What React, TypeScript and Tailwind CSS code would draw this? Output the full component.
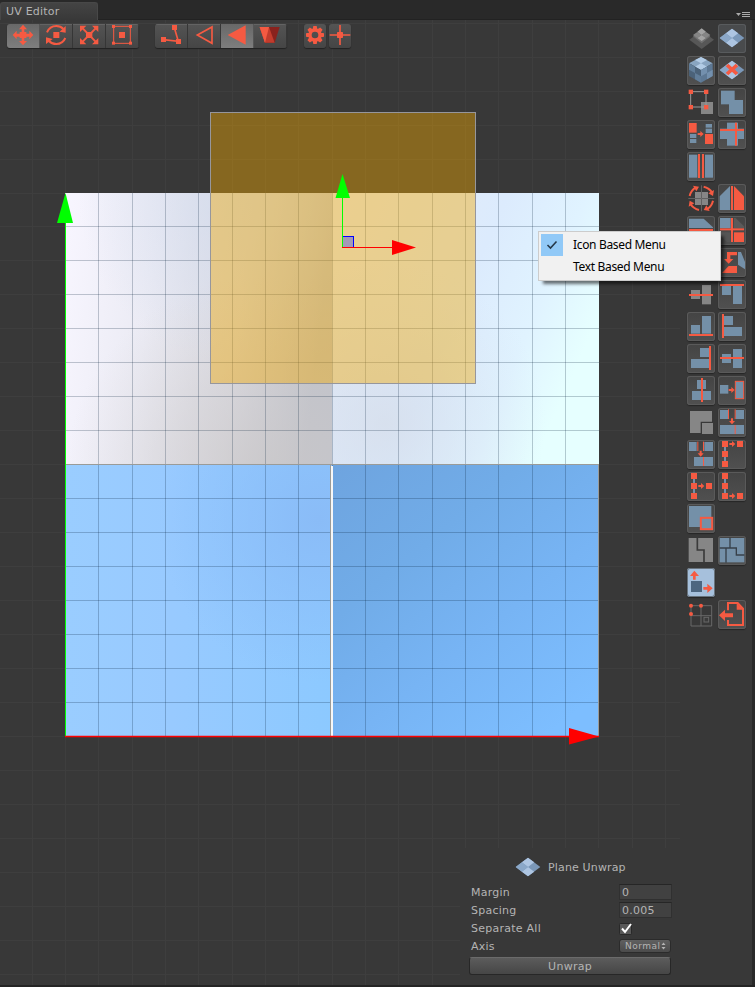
import React from "react";

const RED = "#f55a42";
const BLUE = "#7490a8";
const GRAY = "#868686";
const DARK = "#3b3b3b";

type Box = [number, number, number, number];

const Rects = ({ c, r }: { c: string; r: Box[] }) => (
  <>
    {r.map(([x, y, w, h], i) => (
      <rect key={i} x={x} y={y} width={w} height={h} fill={c} />
    ))}
  </>
);

/* Small arrow centred on x, y; rot turns it from pointing right. */
const Arrow = ({ x, y, rot = 0 }: { x: number; y: number; rot?: number }) => (
  <path transform={`translate(${x} ${y}) rotate(${rot})`} d="M-9-3H-1V-9L9 0L-1 9V3H-9Z" fill={RED} />
);

const Diamond = ({ a = "#adc5e2", b = "#7b98b9" }: { a?: string; b?: string }) => (
  <>
    <path d="M42 14L79 42L42 70L5 42Z" fill={b} />
    <path d="M42 14L60.500 28L42 42L23.500 28ZM42 42L60.500 56L42 70L23.500 56Z" fill={a} />
    <path d="M23.500 28L42 42L23.500 56L5 42Z" fill="#8ba8c9" />
  </>
);

const icons: Record<string, React.ReactNode> = {
  layers: (
    <>
      <path d="M44 20L81 47L44 75L7 47Z" fill="#575757" />
      <path d="M44 16L70 37L44 58L18 37Z" fill="#707070" />
      <path d="M44 13L57 23L44 33L31 23ZM44 33L57 42L44 51L31 42Z" fill="#a3a3a3" />
      <path d="M31 24L44 33L31 42L18 33ZM57 24L70 33L57 42L44 33Z" fill="#858585" />
    </>
  ),
  plane: <Diamond />,
  cube: (
    <>
      <path d="M42 3L77 22L42 42L6 22Z" fill="#89a5c1" />
      <path d="M42 3L60 12L42 22L24 12ZM42 22L60 32L42 42L24 32Z" fill="#b2cbe5" />
      <path d="M6 22L42 42V80L6 60Z" fill="#4b6279" />
      <path d="M6 22L24 32V51L6 41ZM24 51L42 61V80L24 70Z" fill="#617d99" />
      <path d="M77 22L42 42V80L77 60Z" fill="#5d7894" />
      <path d="M42 42L60 32V51L42 61ZM60 51L77 41V60L60 70Z" fill="#7390ae" />
    </>
  ),
  planeX: (
    <>
      <Diamond />
      <path d="M27 27L57 54M57 27L27 54" stroke={RED} strokeWidth="11" />
    </>
  ),
  scaleBox: (
    <>
      <Rects c={GRAY} r={[[42, 42, 36, 36]]} />
      <path d="M11 11H57V57H11Z" fill="none" stroke="#999" strokeWidth="3" />
      <Rects c={RED} r={[[5, 5, 13, 13], [51, 5, 13, 13], [5, 51, 13, 13], [51, 51, 13, 13]]} />
    </>
  ),
  union: <Rects c={BLUE} r={[[9, 8, 41, 41], [33, 36, 42, 42]]} />,
  swap: (
    <>
      <Rects c={BLUE} r={[[56, 12, 19, 11], [56, 26, 19, 13], [9, 42, 19, 12], [9, 57, 19, 12]]} />
      <Rects c={RED} r={[[6, 9, 23, 29], [54, 42, 24, 30]]} />
      <Arrow x={41} y={42} />
    </>
  ),
  cross: (
    <>
      <Rects c={BLUE} r={[[6, 26, 72, 31], [27, 8, 33, 69]]} />
      <Rects c={RED} r={[[6, 27, 72, 6], [51, 8, 6, 69]]} />
    </>
  ),
  split: (
    <>
      <Rects c={BLUE} r={[[6, 8, 25, 69], [54, 8, 24, 69]]} />
      <Rects c={RED} r={[[33, 6, 6, 72], [45, 6, 6, 72]]} />
    </>
  ),
  rotate: (
    <>
      <Rects c={GRAY} r={[[24, 24, 18, 18], [45, 24, 18, 18], [24, 45, 18, 18], [45, 45, 18, 18]]} />
      <path d="M43.500 4V82M4 43.500H82" stroke="#757575" strokeWidth="2" />
      {[0, 90, 180, 270].map((a) => (
        <g key={a} transform={`rotate(${a} 43 43)`}>
          <path d="M8 36Q12 19 25 11" stroke={RED} strokeWidth="6" fill="none" />
          <path d="M18 5L36 8L28 22Z" fill={RED} />
        </g>
      ))}
    </>
  ),
  mirrorH: (
    <>
      <path d="M5 78V37L36 6V78Z" fill={BLUE} />
      <Rects c={RED} r={[[39, 6, 6, 72]]} />
      <path d="M48 6L78 37V78H48Z" fill={RED} />
    </>
  ),
  mirrorV: (
    <>
      <path d="M6 8H50L78 34V36H6Z" fill={BLUE} />
      <Rects c={RED} r={[[6, 39, 72, 6]]} />
      <path d="M6 48H78L50 78H6Z" fill={RED} />
    </>
  ),
  mirrorBoth: (
    <>
      <Rects c={BLUE} r={[[6, 6, 32, 30]]} />
      <path d="M53 6L78 31V36H48V6Z" fill="#5a5a5a" />
      <Rects c={RED} r={[[39, 6, 6, 72], [6, 37, 72, 6], [48, 49, 30, 29]]} />
      <path d="M6 49H36V78H27L6 58Z" fill="#555" />
    </>
  ),
  turn: (
    <>
      <path d="M57 12H27V33H18L32 47L46 33H37V22H57Z" fill={RED} />
      <path d="M32 54H57V75H12Z" fill={RED} />
      <path d="M60 12H69L81 42V64L60 50Z" fill={BLUE} />
    </>
  ),
  midGray: (
    <>
      <Rects c={GRAY} r={[[12, 30, 27, 27], [45, 15, 27, 58]]} />
      <Rects c={RED} r={[[6, 42, 72, 6]]} />
    </>
  ),
  alignTop: (
    <>
      <Rects c={BLUE} r={[[12, 18, 27, 27], [45, 18, 27, 54]]} />
      <Rects c={RED} r={[[6, 12, 72, 6]]} />
    </>
  ),
  alignBottom: (
    <>
      <Rects c={BLUE} r={[[12, 39, 27, 26], [45, 12, 27, 53]]} />
      <Rects c={RED} r={[[6, 66, 72, 6]]} />
    </>
  ),
  alignLeft: (
    <>
      <Rects c={BLUE} r={[[18, 12, 27, 27], [18, 45, 54, 27]]} />
      <Rects c={RED} r={[[12, 6, 6, 72]]} />
    </>
  ),
  alignRight: (
    <>
      <Rects c={BLUE} r={[[39, 12, 27, 27], [12, 45, 54, 27]]} />
      <Rects c={RED} r={[[66, 6, 6, 72]]} />
    </>
  ),
  alignMiddle: (
    <>
      <Rects c={BLUE} r={[[12, 30, 27, 27], [45, 15, 27, 57]]} />
      <Rects c={RED} r={[[6, 39, 72, 6]]} />
    </>
  ),
  alignCenter: (
    <>
      <Rects c={BLUE} r={[[30, 12, 27, 27], [15, 45, 57, 27]]} />
      <Rects c={RED} r={[[42, 6, 6, 72]]} />
    </>
  ),
  fit: (
    <>
      <Rects c={BLUE} r={[[6, 27, 25, 26]]} />
      <Arrow x={41} y={42} />
      <rect x="52" y="16" width="25" height="52" fill={BLUE} stroke={RED} strokeWidth="3" />
    </>
  ),
  grayCorner: (
    <>
      <path d="M9 9H75V41H41V75H9Z" fill={GRAY} />
      <Rects c={GRAY} r={[[45, 45, 33, 33]]} />
    </>
  ),
  weldWide: (
    <>
      <Rects c={BLUE} r={[[6, 6, 24, 27], [53, 6, 25, 27], [6, 51, 72, 27]]} />
      <Rects c={RED} r={[[30, 4, 3, 29], [50, 4, 3, 29], [50, 51, 3, 27]]} />
      <Arrow x={42} y={40} rot={90} />
    </>
  ),
  weldOffset: (
    <>
      <Rects c={BLUE} r={[[6, 6, 23, 27], [52, 6, 26, 27], [21, 51, 57, 27]]} />
      <Rects c={RED} r={[[31, 5, 3, 28], [48, 5, 3, 28], [48, 51, 3, 27]]} />
      <Arrow x={41} y={41} rot={90} />
    </>
  ),
  vertTop: (
    <>
      <Rects c={BLUE} r={[[18, 5, 6, 70]]} />
      <Rects c={RED} r={[[12, 3, 18, 18], [57, 3, 18, 18], [12, 33, 18, 18], [12, 63, 18, 18]]} />
      <Arrow x={43} y={12} />
    </>
  ),
  vertMid: (
    <>
      <Rects c={BLUE} r={[[18, 5, 6, 70]]} />
      <Rects c={RED} r={[[12, 3, 18, 18], [57, 33, 18, 18], [12, 33, 18, 18], [12, 63, 18, 18]]} />
      <Arrow x={43} y={42} />
    </>
  ),
  vertBot: (
    <>
      <Rects c={BLUE} r={[[18, 5, 6, 70]]} />
      <Rects c={RED} r={[[12, 3, 18, 18], [57, 63, 18, 18], [12, 33, 18, 18], [12, 63, 18, 18]]} />
      <Arrow x={43} y={72} />
    </>
  ),
  subSelect: (
    <>
      <Rects c={BLUE} r={[[6, 6, 67, 63]]} />
      <rect x="41.500" y="41.500" width="34" height="34" fill={BLUE} stroke={RED} strokeWidth="6" />
    </>
  ),
  splitGray: (
    <>
      <Rects c={GRAY} r={[[5, 6, 73, 72]]} />
      <path d="M31 6V42H51V78" fill="none" stroke={DARK} strokeWidth="5" />
    </>
  ),
  islands: (
    <>
      <Rects c={BLUE} r={[[5, 6, 74, 73]]} />
      <path d="M36 5V36H5M36 36H55V57H79M24 38V80" fill="none" stroke="#374049" strokeWidth="4" />
    </>
  ),
  move: (
    <>
      <Rects c="#4d6680" r={[[12, 39, 33, 33]]} />
      <path d="M18 35V24H9L22 8L36 24H26V35Z" fill={RED} />
      <path d="M49 57H61V47L77 61L61 75V65H49Z" fill={RED} />
    </>
  ),
  gridGray: (
    <>
      <path d="M12 17H74V78H12ZM42 17V78M12 47H74" fill="none" stroke="#686868" strokeWidth="3" />
      <rect x="51" y="52" width="14" height="14" fill={DARK} stroke="#686868" strokeWidth="3" />
      <circle cx="12" cy="17" r="6" fill={RED} />
      <circle cx="42" cy="17" r="6" fill={RED} />
      <circle cx="12" cy="42" r="6" fill={RED} />
    </>
  ),
  exportIcon: (
    <>
      <path d="M30 31V9H59L75 26V75H30V60" fill="none" stroke={RED} strokeWidth="6" />
      <path d="M56 9V29H76Z" fill={RED} />
      <path d="M3 46L21 29V40H45V52H21V63Z" fill={RED} />
    </>
  ),
};

type Kind = "btn" | "flat" | "active" | "light";
const tools: ([string, Kind] | null)[] = [
  ["layers", "flat"], ["plane", "active"],
  ["cube", "btn"], ["planeX", "btn"],
  ["scaleBox", "flat"], ["union", "btn"],
  ["swap", "btn"], ["cross", "btn"],
  ["split", "btn"], null,
  ["rotate", "flat"], ["mirrorH", "btn"],
  ["mirrorV", "btn"], ["mirrorBoth", "btn"],
  null, ["turn", "btn"],
  ["midGray", "flat"], ["alignTop", "btn"],
  ["alignBottom", "btn"], ["alignLeft", "btn"],
  ["alignRight", "btn"], ["alignMiddle", "btn"],
  ["alignCenter", "btn"], ["fit", "btn"],
  ["grayCorner", "flat"], ["weldWide", "btn"],
  ["weldOffset", "btn"], ["vertTop", "btn"],
  ["vertMid", "btn"], ["vertBot", "btn"],
  ["subSelect", "btn"], null,
  ["splitGray", "flat"], ["islands", "btn"],
  ["move", "light"], null,
  ["gridGray", "flat"], ["exportIcon", "btn"],
];

const kindClass: Record<Kind, string> = {
  btn: "rounded-[3px] bg-linear-to-b from-[#444] to-[#505050] shadow-[inset_0_0_0_1px_#5a5a5a,0_1px_1px_#262626]",
  active: "rounded-[3px] bg-[#494b4d] shadow-[inset_0_0_0_1px_#585b5d]",
  light: "rounded-[3px] bg-[#a6c0dc] shadow-[inset_0_0_0_1px_#68737d,0_1px_1px_#262626]",
  flat: "",
};

const TopIcon = ({ children }: { children: React.ReactNode }) => (
  <svg width="33" height="24" viewBox="0 0 99 72" className="block" fill={RED}>
    {children}
  </svg>
);

const topBtn =
  "flex h-6 w-[33px] items-center justify-center bg-linear-to-b from-[#545454] to-[#454545] shadow-[inset_-1px_0_0_#363636,inset_0_1px_0_#636363]";
const topActive =
  "flex h-6 w-[33px] items-center justify-center bg-linear-to-b from-[#686868] to-[#7e7e7e] shadow-[inset_-1px_0_0_#555]";

function TopBar() {
  return (
    <div className="flex h-6">
      <div className="flex overflow-hidden rounded-[3px] shadow-[0_1px_1px_#222]">
        <div className={topActive}>
          <TopIcon>
            <path d="M48 2L60 16H52V29H67V20L79 33L67 46V38H52V51H60L48 64L36 51H44V38H29V46L17 33L29 20V29H44V16H36Z" />
            <rect x="38" y="24" width="20" height="18" />
          </TopIcon>
        </div>
        <div className={topBtn}>
          <TopIcon>
            <path d="M21 25Q29 6 49 6Q62 6 70 15" fill="none" stroke={RED} strokeWidth="6" />
            <path d="M77 6V26L59 23Z" />
            <path d="M76 42Q68 60 49 60Q35 60 27 51" fill="none" stroke={RED} strokeWidth="6" />
            <path d="M18 60V40L38 45Z" />
            <rect x="40" y="24" width="18" height="18" />
          </TopIcon>
        </div>
        <div className={topBtn}>
          <TopIcon>
            <path d="M27 11L70 55M70 11L27 55" stroke={RED} strokeWidth="6" />
            <path d="M21 5H40L21 24ZM76 5V24L57 5ZM76 61H57L76 42ZM21 61V42L40 61Z" />
            <rect x="39" y="24" width="19" height="18" />
          </TopIcon>
        </div>
        <div className={topBtn}>
          <TopIcon>
            <rect x="23" y="7" width="50" height="51" fill="none" stroke={RED} strokeWidth="3" />
            <Rects c={RED} r={[[18, 3, 9, 9], [69, 3, 9, 9], [18, 53, 9, 9], [69, 53, 9, 9], [39, 24, 18, 18]]} />
          </TopIcon>
        </div>
      </div>
      <div className="ml-4 flex overflow-hidden rounded-[3px] shadow-[0_1px_1px_#222]">
        <div className={topBtn}>
          <TopIcon>
            <path d="M58 11L70 52L25 47" fill="none" stroke={RED} strokeWidth="5" />
            <Rects c={RED} r={[[51, 3, 15, 15], [63, 45, 15, 15], [18, 39, 15, 15]]} />
          </TopIcon>
        </div>
        <div className={topBtn}>
          <TopIcon>
            <path d="M72 9V58L28 33Z" fill="none" stroke={RED} strokeWidth="5" />
          </TopIcon>
        </div>
        <div className={topActive}>
          <TopIcon>
            <path d="M74 4V62L20 33Z" />
          </TopIcon>
        </div>
        <div className={topBtn}>
          <TopIcon>
            <path d="M17 9H45L33 56Z" />
            <path d="M45 9H77L62 56H33Z" fill="#89221d" />
            <path d="M17 9H45L62 56H33Z" fill="#c23c2d" />
            <path d="M17 9H45L33 56Z" />
          </TopIcon>
        </div>
      </div>
      <div className="ml-[17px] flex gap-[3px]">
        <div className="h-6 w-[22px] overflow-hidden rounded-[3px] bg-linear-to-b from-[#545454] to-[#454545] shadow-[0_1px_1px_#222]">
          <svg width="22" height="24" viewBox="-33 -33 66 72" className="block">
            <circle r="15" fill="none" stroke={RED} strokeWidth="10" />
            {[0, 45, 90, 135, 180, 225, 270, 315].map((a) => (
              <path key={a} transform={`rotate(${a})`} d="M-7-17L-5-27H5L7-17Z" fill={RED} />
            ))}
          </svg>
        </div>
        <div className="h-6 w-[22px] overflow-hidden rounded-[3px] bg-linear-to-b from-[#545454] to-[#454545] shadow-[0_1px_1px_#222]">
          <svg width="22" height="24" viewBox="-33 -33 66 72" className="block">
            <path d="M0-30V30M-31 0H31" stroke={RED} strokeWidth="5" />
            <rect x="-9" y="-9" width="18" height="18" rx="2" fill={RED} />
          </svg>
        </div>
      </div>
    </div>
  );
}

const STEPX = 33.34;
const STEPY = 33.97;

function Canvas() {
  const xs = Array.from({ length: 21 }, (_, i) => Math.floor(65.500 + (i - 1) * STEPX) + 0.5);
  const ys = Array.from({ length: 30 }, (_, i) => Math.floor(193 + (i - 5) * STEPY) + 0.5);
  return (
    <svg width="755" height="987" viewBox="0 0 755 987" className="absolute top-0 left-0">
      <defs>
        <linearGradient id="tl" x1="0" y1="0" x2="1" y2="0.120">
          <stop offset="0" stopColor="#f8f6ff" />
          <stop offset="0.35" stopColor="#ebebf4" />
          <stop offset="0.7" stopColor="#dadae2" />
          <stop offset="1" stopColor="#bcbfc9" />
        </linearGradient>
        <radialGradient id="tlBlue" cx="0.7" cy="0" r="0.65">
          <stop offset="0" stopColor="#cfdaee" stopOpacity="0.7" />
          <stop offset="1" stopColor="#cfdaee" stopOpacity="0" />
        </radialGradient>
        <radialGradient id="tlWarm" cx="0.75" cy="1.05" r="0.75">
          <stop offset="0" stopColor="#cbc8c8" stopOpacity="0.75" />
          <stop offset="0.5" stopColor="#cfcccc" stopOpacity="0.4" />
          <stop offset="1" stopColor="#d6d2d2" stopOpacity="0" />
        </radialGradient>
        <linearGradient id="tr" x1="0" y1="0" x2="1" y2="0.450">
          <stop offset="0" stopColor="#e6eaf5" />
          <stop offset="0.55" stopColor="#dcebfd" />
          <stop offset="0.8" stopColor="#e0f3ff" />
          <stop offset="1" stopColor="#e6ffff" />
        </linearGradient>
        <radialGradient id="trShade" cx="0.2" cy="0.85" r="0.6">
          <stop offset="0" stopColor="#d5dce8" stopOpacity="0.7" />
          <stop offset="1" stopColor="#d5dfee" stopOpacity="0" />
        </radialGradient>
        <linearGradient id="bl" x1="0" y1="0" x2="1" y2="0">
          <stop offset="0" stopColor="#9acdff" />
          <stop offset="0.4" stopColor="#98caff" />
          <stop offset="1" stopColor="#8cc9ff" />
        </linearGradient>
        <radialGradient id="blShade" cx="0.95" cy="0.2" r="0.6">
          <stop offset="0" stopColor="#8abcf7" />
          <stop offset="1" stopColor="#8cbcf9" stopOpacity="0" />
        </radialGradient>
        <linearGradient id="br" x1="0" y1="0" x2="0.8" y2="1">
          <stop offset="0" stopColor="#6ea4df" />
          <stop offset="0.35" stopColor="#71ace8" />
          <stop offset="0.65" stopColor="#77b4f4" />
          <stop offset="1" stopColor="#7dbeff" />
        </linearGradient>
      </defs>
      <rect width="755" height="987" fill="#383838" />
      <g stroke="#3e3e3e">
        {xs.map((x) => <path key={x} d={`M${x} 20V985`} />)}
        {ys.map((y) => <path key={y} d={`M0 ${y}H680`} />)}
      </g>
      <rect x="65" y="193" width="267" height="272" fill="url(#tl)" />
      <rect x="65" y="193" width="267" height="272" fill="url(#tlBlue)" />
      <rect x="65" y="193" width="267" height="272" fill="url(#tlWarm)" />
      <rect x="332" y="193" width="267" height="272" fill="url(#tr)" />
      <rect x="332" y="193" width="267" height="272" fill="url(#trShade)" />
      <rect x="65" y="465" width="267" height="272" fill="url(#bl)" />
      <rect x="65" y="465" width="267" height="272" fill="url(#blShade)" />
      <rect x="332" y="465" width="267" height="272" fill="url(#br)" />
      <g stroke="#001a33" strokeOpacity="0.23">
        {xs.filter((x) => x > 66 && x < 598).map((x) => <path key={x} d={`M${x} 193V737`} />)}
        {ys.filter((y) => y > 194 && y < 736).map((y) => <path key={y} d={`M65 ${y}H599`} />)}
      </g>
      <path d="M65 464.500H599M598.500 465V737M330.500 465V737" stroke="#9a9b98" />
      <path d="M332 466V737" stroke="#f7f7f7" strokeWidth="2" />
      <path d="M65.500 215V737" stroke="#0f0" />
      <path d="M65.500 193L73 223H57Z" fill="#0f0" />
      <path d="M65 736.500H599" stroke="red" strokeWidth="1.500" />
      <path d="M599 736.500L569 728V744.500Z" fill="red" />
      <rect x="210.500" y="112.500" width="265" height="271" fill="#f3aa00" fillOpacity="0.42" stroke="#96969c" />
      <rect x="342.500" y="236.500" width="11" height="11" fill="#a39ab6" stroke="#00f" />
      <path d="M342.500 190V247" stroke="#0f0" />
      <path d="M342.500 174L350 198H335.500Z" fill="#0f0" />
      <path d="M342 247.500H400" stroke="red" />
      <path d="M416 247.500L392 240V255Z" fill="red" />
    </svg>
  );
}

function ContextMenu() {
  return (
    <div className="absolute top-[231px] left-[538px] flex h-[50px] w-[183px] flex-col border border-[#ccc] bg-[#f1f1f1] px-[2px] pt-[2px] font-['Noto_Sans',sans-serif] text-[12px] tracking-[-0.33px] text-black shadow-[4px_4px_3px_-1px_rgba(0,0,0,0.55)]">
      <div className="flex h-[22px] items-center">
        <span className="flex h-[22px] w-[22px] items-center justify-center bg-[#91c9f7]">
          <svg width="12" height="10" viewBox="0 0 12 10" fill="none" stroke="#26394a" strokeWidth="1.600">
            <path d="M1.500 5L4.500 8L10.500 1.500" />
          </svg>
        </span>
        <span className="ml-[10px] whitespace-nowrap">Icon Based Menu</span>
      </div>
      <div className="flex h-[22px] items-center pl-8">
        <span className="whitespace-nowrap">Text Based Menu</span>
      </div>
    </div>
  );
}

const field =
  "flex h-4 w-[53px] items-center border border-[#303030] border-t-[#262626] bg-[#414141] pl-[2px]";

function SettingsPanel() {
  return (
    <div className="absolute top-[848px] left-[460px] flex h-[137px] w-[221px] flex-col bg-[#383838] pr-[9px] pl-[9px] tracking-[0.25px] text-[#b4b4b4]">
      <div className="mt-[6px] flex h-[27px] items-center pl-[45px]">
        <svg width="28" height="29" viewBox="0 0 84 87" className="block shrink-0">
          <Diamond />
        </svg>
        <span className="ml-[6px] tracking-[0.15px]">Plane Unwrap</span>
      </div>
      <div className="mt-[2px] flex h-[18px] items-center justify-between pl-[2px]">
        <span>Margin</span>
        <span className={field}>0</span>
      </div>
      <div className="flex h-[18px] items-center justify-between pl-[2px]">
        <span>Spacing</span>
        <span className={field}>0.005</span>
      </div>
      <div className="flex h-[18px] items-center justify-between pl-[2px]">
        <span>Separate All</span>
        <span className="flex w-[53px]">
          <svg width="14" height="13" viewBox="0 0 14 13">
            <rect x="0.500" y="1.500" width="12" height="11" rx="1" fill="#585858" stroke="#292929" />
            <path d="M3 6.500L6 10L12 2" fill="none" stroke="#fff" strokeWidth="2" />
          </svg>
        </span>
      </div>
      <div className="flex h-[18px] items-center justify-between pl-[2px]">
        <span>Axis</span>
        <span className="mr-px flex h-[14px] w-[52px] items-center justify-between rounded-[3px] border border-[#2b2b2b] bg-linear-to-b from-[#606060] to-[#4b4b4b] pr-1 pl-[5px] text-[9px] tracking-[0.5px]">
          Normal
          <svg width="5" height="8" viewBox="0 0 5 8" fill="#b4b4b4">
            <path d="M2.500 0.500L4.500 3H0.500ZM2.500 7.500L4.500 5H0.500Z" />
          </svg>
        </span>
      </div>
      <div className="mt-[2px] flex h-[18px] w-[202px] items-center justify-center rounded-[3px] border border-[#272727] border-t-[#6b6b6b] bg-linear-to-b from-[#5c5c5c] to-[#464646]">
        Unwrap
      </div>
    </div>
  );
}

export default function App() {
  return (
    <div className="relative flex h-[987px] w-[755px] flex-col overflow-hidden bg-[#383838] font-['DejaVu_Sans',sans-serif] text-[11px] leading-none">
      <Canvas />
      <header className="relative flex h-5 shrink-0 justify-between border-b border-[#222] bg-[#292929]">
        <div className="mt-[2px] flex h-[18px] w-[98px] items-center rounded-t-[3px] border border-b-0 border-[#484848] bg-linear-to-b from-[#444] to-[#383838] pl-[5px] tracking-[0.2px] text-[#b4b4b4]">
          UV Editor
        </div>
        <svg width="14" height="8" viewBox="0 0 14 8" className="mt-[11px] mr-[5px]" stroke="#aaa">
          <path d="M6 1.500H14M6 3.500H14M6 5.500H14" />
          <path d="M0 2H5L2.500 5Z" fill="#aaa" stroke="none" />
        </svg>
      </header>
      <div className="relative flex h-[965px] shrink-0 justify-between">
        <div className="pt-1 pl-[7px]">
          <TopBar />
        </div>
        <aside className="flex w-[75px] border-r-[3px] border-[#292929] bg-[#383838] pt-1 pl-[7px]">
          <div className="grid h-[605px] auto-rows-[29px] grid-cols-[28px_28px] gap-[3px]">
            {tools.map((t, i) =>
              t ? (
                <div key={i} className={kindClass[t[1]]}>
                  <svg width="28" height="29" viewBox="0 0 84 87" className="block">
                    {icons[t[0]]}
                  </svg>
                </div>
              ) : (
                <div key={i} />
              )
            )}
          </div>
        </aside>
      </div>
      <div className="relative h-[2px] bg-[#242424]" />
      <SettingsPanel />
      <ContextMenu />
    </div>
  );
}
